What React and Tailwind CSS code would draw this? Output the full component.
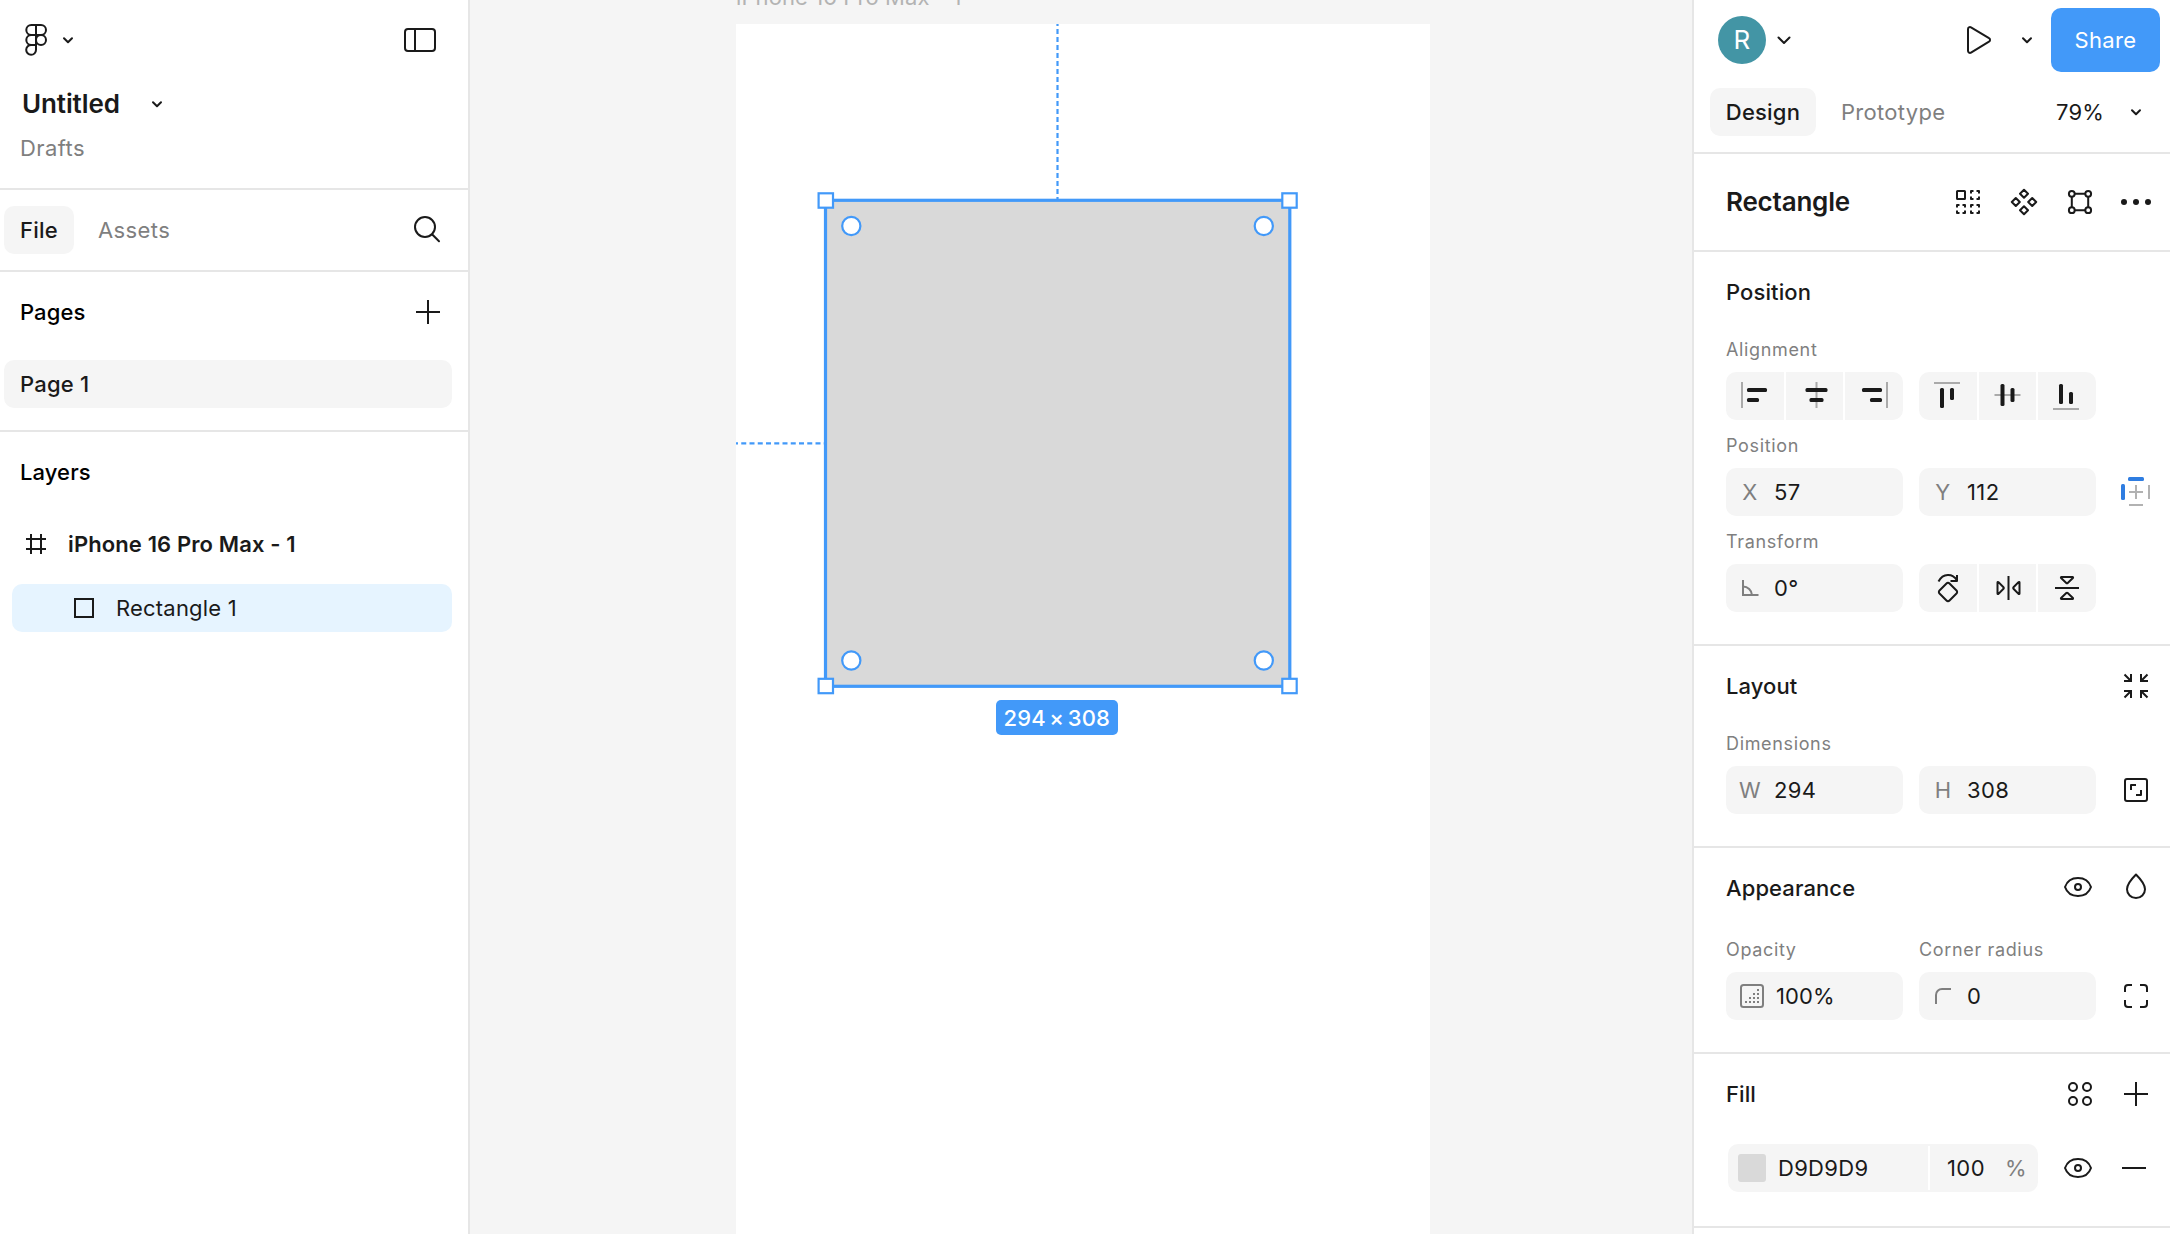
import React from 'react';

// All icons sit on the same 48px grid
const Icon = ({ children, className = 'text-[#1a1a1a]' }) => (
  <svg
    className={`w-12 h-12 shrink-0 ${className}`}
    viewBox="0 0 48 48"
    fill="none"
    stroke="currentColor"
    strokeWidth="2"
    strokeLinejoin="round"
  >
    {children}
  </svg>
);

const Chevron = ({ className }) => (
  <svg className={`w-4 h-4 shrink-0 text-[#1a1a1a] ${className || ''}`} viewBox="0 0 16 16" fill="none" stroke="currentColor" strokeWidth="2" strokeLinecap="round" strokeLinejoin="round">
    <path d="M4 6.200l4 4 4-4" />
  </svg>
);

const FigmaIcon = () => (
  <Icon>
    <path d="M24 9h-4.7a5 5 0 0 0 0 10H24M24 9h5a5 5 0 0 1 0 10h-5M24 19h-4.7a5 5 0 0 0 0 10H24M24 9v24.8a4.9 4.9 0 1 1-4.7-4.8" />
    <circle cx="29" cy="24" r="5" />
  </Icon>
);

const PanelIcon = () => (
  <Icon>
    <rect x="9" y="13" width="30" height="22" rx="3" />
    <path d="M19 13v22" />
  </Icon>
);

const SearchIcon = () => (
  <Icon>
    <circle cx="21" cy="21" r="10" />
    <path d="M28.3 28.500l6.700 6.700" strokeLinecap="round" />
  </Icon>
);

const PlusIcon = () => (
  <Icon>
    <path d="M24 12v24M12 24h24" />
  </Icon>
);

const FrameIcon = () => (
  <Icon>
    <path d="M19 14v20M29 14v20M14 19h20M14 29h20" />
  </Icon>
);

const PlayIcon = () => (
  <Icon>
    <path d="M14 13.2a2 2 0 0 1 3-1.8l18 10.8a2 2 0 0 1 0 3.5L17 36.6a2 2 0 0 1-3-1.8z" />
  </Icon>
);

const GridIcon = () => (
  <Icon>
    <rect x="13" y="13" width="8" height="8" rx="0.5" />
    <path d="M27 13h8v8h-8z" strokeDasharray="5 3" strokeDashoffset="2.5" />
    <path d="M13 27h8v8h-8z" strokeDasharray="5 3" strokeDashoffset="2.5" />
    <path d="M27 27h8v8h-8z" strokeDasharray="5 3" strokeDashoffset="2.5" />
  </Icon>
);

const ComponentIcon = () => (
  <Icon>
    <path d="M24 11.8l4 4-4 4-4-4zM24 28.2l4 4-4 4-4-4zM15.8 20l4 4-4 4-4-4zM32.2 20l4 4-4 4-4-4z" />
  </Icon>
);

const VectorIcon = () => (
  <Icon>
    <circle cx="15.8" cy="15.8" r="2.9" />
    <circle cx="32.2" cy="15.8" r="2.9" />
    <circle cx="15.8" cy="32.2" r="2.9" />
    <circle cx="32.2" cy="32.2" r="2.9" />
    <path d="M18.5 15.8h11M18.5 32.2h11M15.8 18.5v11M32.2 18.5v11" />
  </Icon>
);

const DotsIcon = () => (
  <Icon>
    <g fill="currentColor" stroke="none">
      <circle cx="12" cy="24" r="3" />
      <circle cx="24" cy="24" r="3" />
      <circle cx="36" cy="24" r="3" />
    </g>
  </Icon>
);

const EyeIcon = () => (
  <Icon>
    <path d="M11 24c2-5.8 7-9 13-9s11 3.200 13 9c-2 5.800-7 9-13 9s-11-3.200-13-9z" />
    <circle cx="24" cy="24" r="3" />
  </Icon>
);

const DropIcon = () => (
  <Icon>
    <path d="M24 11.500c-3.500 3.500-9 9.200-9 14.700a9 8.800 0 0 0 18 0c0-5.500-5.500-11.200-9-14.700z" />
  </Icon>
);

const CollapseIcon = () => (
  <Icon>
    <g strokeLinejoin="miter">
      <path d="M12.500 12.500l6.500 6.500M19 12v7h-7" />
      <path d="M35.500 12.500L29 19M29 12v7h7" />
      <path d="M12.500 35.500L19 29M19 36v-7h-7" />
      <path d="M35.500 35.500L29 29M29 36v-7h7" />
    </g>
  </Icon>
);

const RatioIcon = () => (
  <Icon>
    <rect x="13" y="13" width="22" height="22" rx="2" />
    <path d="M19 24v-5h5M29 24v5h-5" />
  </Icon>
);

const CornersIcon = () => (
  <Icon>
    <path d="M13 20v-4a3 3 0 0 1 3-3h4M28 13h4a3 3 0 0 1 3 3v4M35 28v4a3 3 0 0 1-3 3h-4M20 35h-4a3 3 0 0 1-3-3v-4" />
  </Icon>
);

const StylesIcon = () => (
  <Icon>
    <circle cx="17" cy="17" r="4" />
    <circle cx="31" cy="17" r="4" />
    <circle cx="17" cy="31" r="4" />
    <circle cx="31" cy="31" r="4" />
  </Icon>
);

const ConstraintsIcon = () => (
  <Icon>
    <path d="M24 17v14M17 24h14M37 17v14M17 37h14" className="text-[#b2b2b2]" stroke="currentColor" />
    <g className="text-[#2f7de1]" fill="currentColor" stroke="none">
      <rect x="16" y="9" width="16" height="4" rx="1.500" />
      <rect x="9" y="16" width="4" height="16" rx="1.500" />
    </g>
  </Icon>
);

const AngleIcon = () => (
  <Icon className="text-[#7f7f7f]">
    <path d="M17 16v15h15.500M17 22.500a9 9 0 0 1 9 8.500" strokeLinejoin="miter" />
  </Icon>
);

const RadiusIcon = () => (
  <Icon className="text-[#7f7f7f]">
    <path d="M17 32v-9a6 6 0 0 1 6-6h9" />
  </Icon>
);

const OpacityIcon = () => (
  <Icon className="text-[#7f7f7f]">
    <rect x="13" y="13" width="22" height="22" rx="2.500" />
    <path d="M29 18h2M25 22h2M29 22h2M21 26h2M25 26h2M29 26h2M17 30h2M21 30h2M25 30h2M29 30h2" />
  </Icon>
);

// guide = thin grey line, bars = the two black blocks as [x, y, w, h]
const alignments = [
  [
    { id: 'left', guide: 'M11 10v26', bars: [[16, 16, 20, 4], [16, 26, 12, 4]] },
    { id: 'center', guide: 'M25.500 10v26', bars: [[14.5, 16, 22, 4], [18.5, 26, 14, 4]] },
    { id: 'right', guide: 'M37 10v26', bars: [[12, 16, 20, 4], [20, 26, 12, 4]] },
  ],
  [
    { id: 'top', guide: 'M10 11h26', bars: [[16, 16, 4, 20], [26, 16, 4, 12]] },
    { id: 'middle', guide: 'M10.500 23h26', bars: [[16.5, 12, 4, 22], [26.5, 16, 4, 14]] },
    { id: 'bottom', guide: 'M10 37h26', bars: [[16, 12, 4, 20], [26, 20, 4, 12]] },
  ],
];

const AlignIcon = ({ guide, bars }) => (
  <Icon>
    <path d={guide} className="text-[#aaaaaa]" stroke="currentColor" />
    {bars.map(([x, y, w, h]) => (
      <rect key={`${x}-${y}`} x={x} y={y} width={w} height={h} rx="1.500" fill="currentColor" stroke="none" />
    ))}
  </Icon>
);

const ButtonGroup = ({ children }) => (
  <div className="grid grid-cols-[58px_57px_58px] gap-0.5 w-[177px] h-12 rounded-[10px] overflow-hidden">
    {React.Children.map(children, (child) => (
      <button className="flex items-center justify-center bg-[#f5f5f5]">{child}</button>
    ))}
  </div>
);

const Field = ({ prefix, value, wide }) => (
  <div className="flex items-center w-[177px] h-12 rounded-[10px] bg-[#f5f5f5]">
    <span className={`flex justify-center shrink-0 text-[#7f7f7f] ${wide ? 'w-[50px] pl-0.5' : 'w-12'}`}>{prefix}</span>
    <span>{value}</span>
  </div>
);

const Label = ({ children, className = '' }) => (
  <div className={`flex items-center h-10 pb-1 text-[18px] tracking-[0.65px] text-[#7f7f7f] ${className}`}>{children}</div>
);

const Section = ({ title, icons, children, className = '' }) => (
  <section className={`shrink-0 border-b-2 border-[#e6e6e6] pl-8 pr-2.5 ${className}`}>
    <div className="flex items-center justify-between h-20">
      <h3 className="font-[550] tracking-[0.1px]">{title}</h3>
      {icons}
    </div>
    {children}
  </section>
);

const LeftPanel = () => (
  <aside className="flex flex-col w-[470px] shrink-0 bg-white border-r-2 border-[#e6e6e6]">
    <div className="h-[190px] shrink-0 border-b-2 border-[#e6e6e6]">
      <div className="flex items-center justify-between h-20 pl-3 pr-6">
        <div className="flex items-center">
          <FigmaIcon />
          <Chevron />
        </div>
        <PanelIcon />
      </div>
      <div className="flex items-center h-12 pl-[22px]">
        <h1 className="w-[127px] text-[26px] font-semibold tracking-[-0.1px]">Untitled</h1>
        <Chevron />
      </div>
      <div className="flex items-center h-10 pl-5 text-[#7f7f7f]">Drafts</div>
    </div>

    <div className="flex items-center h-[82px] shrink-0 pl-1 pr-4 border-b-2 border-[#e6e6e6]">
      <button className="w-[70px] h-12 rounded-[10px] bg-[#f5f5f5] font-[550] tracking-[0.2px]">File</button>
      <span className="flex-1 pl-6 text-[#7f7f7f]">Assets</span>
      <SearchIcon />
    </div>

    <div className="h-[160px] shrink-0 border-b-2 border-[#e6e6e6]">
      <div className="flex items-center justify-between h-20 pl-5 pr-4">
        <h2 className="font-[550] tracking-[0.1px] text-black">Pages</h2>
        <PlusIcon />
      </div>
      <div className="flex items-center h-12 mt-2 ml-1 mr-4 pl-4 rounded-[10px] bg-[#f5f5f5] font-medium tracking-[0.2px]">Page 1</div>
    </div>

    <div className="flex items-center h-20 pl-5">
      <h2 className="font-[550] tracking-[0.1px] text-black">Layers</h2>
    </div>
    <div className="flex items-center h-12 mt-2 pl-3">
      <FrameIcon />
      <span className="pl-2 font-semibold tracking-[0.12px]">iPhone 16 Pro Max - 1</span>
    </div>
    <div className="flex items-center h-12 mt-4 ml-3 mr-4 pl-[62px] rounded-[10px] bg-[#e6f4ff]">
      <span className="w-5 h-5 border-2 border-[#1a1a1a]" />
      <span className="pl-[22px] tracking-[0.2px]">Rectangle 1</span>
    </div>
  </aside>
);

const corners = [
  [89.8, 176.5],
  [553.5, 176.5],
  [89.8, 662],
  [553.5, 662],
];

const radiusHandles = [
  [115.3, 202],
  [527.8, 202],
  [115.3, 636.5],
  [527.8, 636.5],
];

const Canvas = () => (
  <main className="relative flex-1 bg-[#f5f5f5] overflow-hidden">
    <div className="absolute left-[266px] -top-[15px] text-[22px] leading-6 tracking-[0.1px] text-[#b3b3b3]">iPhone 16 Pro Max - 1</div>
    <div className="absolute left-[266px] top-6 w-[694px] h-[1210px] bg-white">
      {/* Selected rectangle */}
      <div className="absolute left-[89px] top-[176px] w-[465px] h-[486px] bg-[#d9d9d9]" />
      <svg className="absolute left-0 top-0 w-[694px] h-[1210px] text-[#4299f9]" viewBox="0 0 694 1210" fill="none" stroke="currentColor">
        <path d="M321.500 0v176" strokeWidth="2.200" strokeDasharray="5 3" strokeDashoffset="3" />
        <path d="M0 419.400h89" strokeWidth="2.200" strokeDasharray="5 3.250" strokeDashoffset="3" />
        <rect x="89.500" y="176.300" width="464.300" height="486" strokeWidth="3.200" />
        {corners.map(([x, y]) => (
          <rect key={`${x}-${y}`} x={x - 7.2} y={y - 7.2} width="14.400" height="14.400" strokeWidth="2.200" fill="#fff" />
        ))}
        {radiusHandles.map(([x, y]) => (
          <circle key={`${x}-${y}`} cx={x} cy={y} r="9.100" strokeWidth="2.200" fill="#fff" />
        ))}
      </svg>
      <div className="absolute left-[259.5px] top-[676px] flex items-center justify-center w-[122.5px] h-[35px] rounded-[5px] bg-[#4299f9] text-white font-[550] tracking-[0.2px] [word-spacing:-2.6px]">
        294 × 308
      </div>
    </div>
  </main>
);

const RightPanel = () => (
  <aside className="flex flex-col w-[478px] shrink-0 bg-white border-l-2 border-[#e6e6e6] overflow-hidden">
    <div className="h-[154px] shrink-0 border-b-2 border-[#e6e6e6]">
      <div className="flex items-center h-20 pl-6 pr-2.5">
        <div className="flex items-center justify-center w-12 h-12 rounded-full bg-[#4395a5] text-white text-[26px]">R</div>
        <svg className="w-5 h-5 ml-2 text-[#1a1a1a]" viewBox="0 0 20 20" fill="none" stroke="currentColor" strokeWidth="2" strokeLinecap="round" strokeLinejoin="round">
          <path d="M4.500 7.500l5.500 5.500 5.500-5.500" />
        </svg>
        <div className="flex items-center ml-auto">
          <PlayIcon />
          <Chevron className="ml-[17px] mr-4" />
          <button className="w-[109px] h-16 rounded-[10px] bg-[#4299f9] text-white">Share</button>
        </div>
      </div>
      <div className="flex items-center h-12 mt-2 pl-4 pr-[26px]">
        <button className="w-[106px] h-12 rounded-[10px] bg-[#f5f5f5] font-[550] tracking-[0.2px]">Design</button>
        <span className="flex-1 pl-[25px] tracking-[0.3px] text-[#7f7f7f]">Prototype</span>
        <span className="w-[72px] tracking-[0.2px]">79%</span>
        <Chevron />
      </div>
    </div>

    <div className="flex items-center justify-between h-[98px] shrink-0 pl-8 pr-2.5 pt-px pb-px border-b-2 border-[#e6e6e6]">
      <h2 className="text-[26px] font-semibold tracking-[-0.2px]">Rectangle</h2>
      <div className="flex gap-2">
        <GridIcon />
        <ComponentIcon />
        <VectorIcon />
        <DotsIcon />
      </div>
    </div>

    <Section title="Position" className="h-[394px]">
      <Label>Alignment</Label>
      <div className="flex gap-4">
        {alignments.map((group) => (
          <ButtonGroup key={group[0].id}>
            {group.map((a) => (
              <AlignIcon key={a.id} guide={a.guide} bars={a.bars} />
            ))}
          </ButtonGroup>
        ))}
      </div>
      <Label className="mt-2">Position</Label>
      <div className="flex gap-4">
        <Field prefix="X" value="57" />
        <Field prefix="Y" value="112" />
        <ConstraintsIcon />
      </div>
      <Label className="mt-2">Transform</Label>
      <div className="flex gap-4">
        <Field prefix={<AngleIcon />} value="0°" />
        <ButtonGroup>
          <Icon>
            <path d="M22.500 19.500a2.100 2.100 0 0 1 3 0l7 7a2.100 2.100 0 0 1 0 3l-7 7a2.100 2.100 0 0 1-3 0l-7-7a2.100 2.100 0 0 1 0-3z" />
            <path d="M14.500 17.500c4.500-8.500 14-8.500 18.500-1M33 11v6h-6.500" />
          </Icon>
          <Icon>
            <path d="M24.500 12v24" />
            <path d="M13.500 18.500v11c0 .6.600.8 1 .4l5-5.200c.4-.4.4-1 0-1.400l-5-5.200c-.4-.4-1-.2-1 .4zM35.500 18.500v11c0 .6-.6.8-1 .4l-5-5.200c-.4-.4-.4-1 0-1.400l5-5.200c.4-.4 1-.2 1 .4z" />
          </Icon>
          <Icon>
            <path d="M12 24h24" />
            <path d="M18.500 13h11c.6 0 .8.600.4 1l-5.200 5c-.4.4-1 .4-1.400 0l-5.200-5c-.4-.4-.2-1 .4-1zM18.500 35h11c.6 0 .8-.6.400-1l-5.200-5c-.4-.4-1-.4-1.400 0l-5.200 5c-.4.4-.2 1 .4 1z" />
          </Icon>
        </ButtonGroup>
      </div>
    </Section>

    <Section title="Layout" icons={<CollapseIcon />} className="h-[202px]">
      <Label>Dimensions</Label>
      <div className="flex gap-4">
        <Field prefix="W" value="294" />
        <Field prefix="H" value="308" />
        <RatioIcon />
      </div>
    </Section>

    <Section
      title="Appearance"
      icons={<div className="flex gap-2.5 pb-0.5"><EyeIcon /><DropIcon /></div>}
      className="h-[206px]"
    >
      <div className="flex gap-4 mt-1">
        <Label className="w-[177px]">Opacity</Label>
        <Label>Corner radius</Label>
      </div>
      <div className="flex gap-4">
        <Field prefix={<OpacityIcon />} value={<span className="tracking-[0.1px]">100%</span>} wide />
        <Field prefix={<RadiusIcon />} value="0" />
        <CornersIcon />
      </div>
    </Section>

    <Section
      title="Fill"
      icons={<div className="flex gap-2"><StylesIcon /><PlusIcon /></div>}
      className="h-[174px]"
    >
      <div className="flex items-center mt-2.5 ml-0.5">
        <div className="flex items-center w-[310px] h-12 rounded-[10px] bg-[#f5f5f5]">
          <span className="w-7 h-7 ml-2.5 rounded-[3px] bg-[#d9d9d9]" />
          <span className="w-[162px] pl-3 tracking-[0.3px]">D9D9D9</span>
          <span className="w-0.5 h-11 bg-white" />
          <span className="pl-[17px] w-[75px]">100</span>
          <span className="text-[#7f7f7f]">%</span>
        </div>
        <span className="ml-4"><EyeIcon /></span>
        <span className="ml-2">
          <Icon><path d="M12 24h24" /></Icon>
        </span>
      </div>
    </Section>
  </aside>
);

export default function App() {
  return (
    <div className="flex w-[2170px] h-[1234px] overflow-hidden bg-white font-['Inter',sans-serif] text-[22px] leading-8 tracking-[0.4px] text-[#1a1a1a]">
      <LeftPanel />
      <Canvas />
      <RightPanel />
    </div>
  );
}
